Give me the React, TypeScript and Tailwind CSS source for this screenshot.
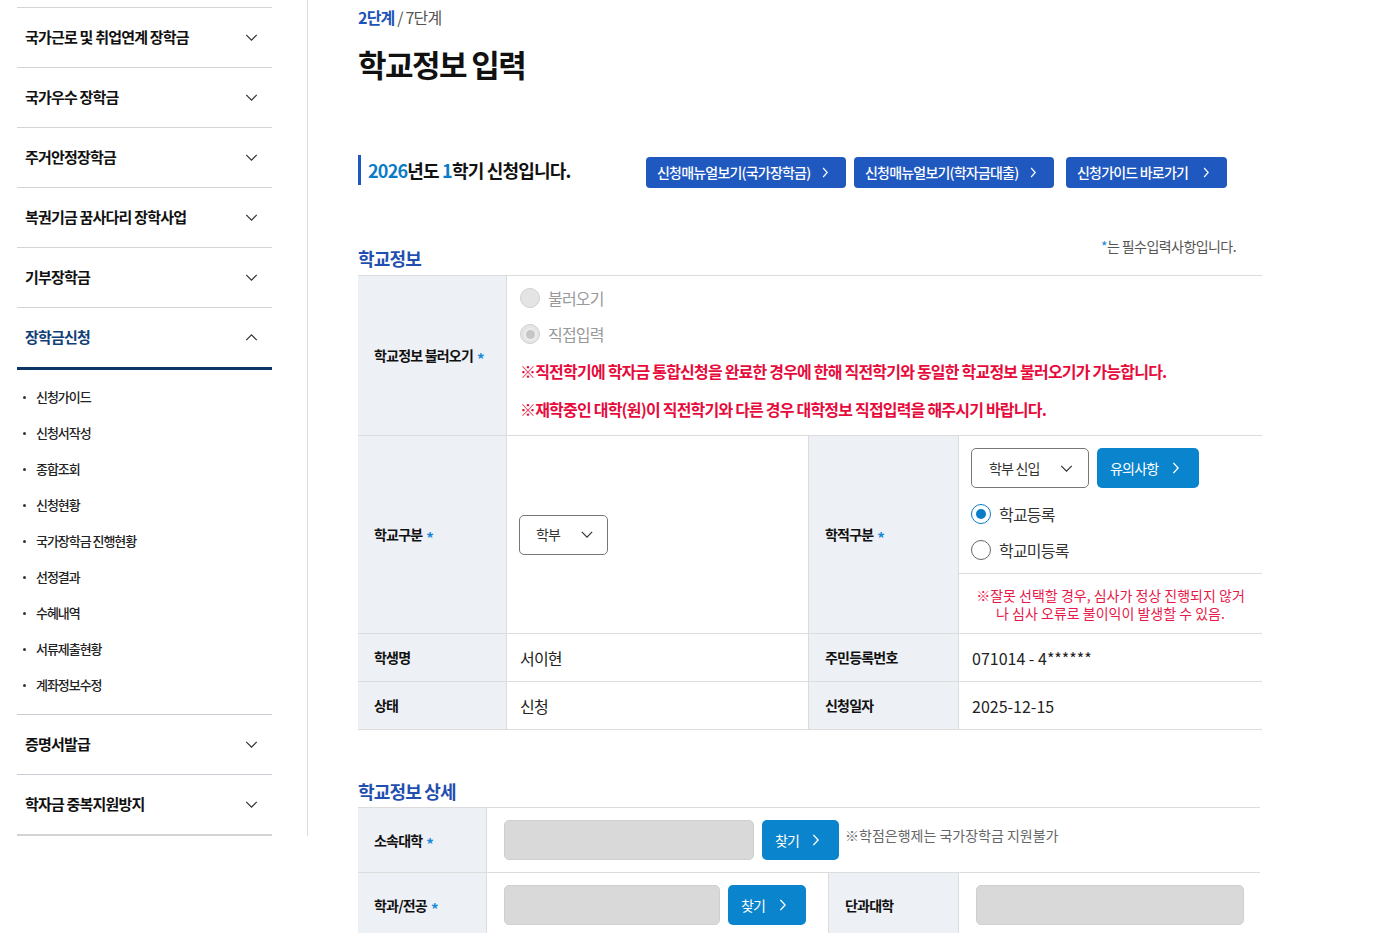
import React from 'react';

const menus = ['국가근로 및 취업연계 장학금', '국가우수 장학금', '주거안정장학금', '복권기금 꿈사다리 장학사업', '기부장학금'];
const subs = ['신청가이드', '신청서작성', '종합조회', '신청현황', '국가장학금 진행현황', '선정결과', '수혜내역', '서류제출현황', '계좌정보수정'];

function ChevronDown({ className = '' }: { className?: string }) {
  return (
    <svg viewBox="0 0 14 8" className={className} fill="none" stroke="currentColor" strokeWidth="1.4">
      <polyline points="1,1 7,7 13,1" />
    </svg>
  );
}

function ChevronUp({ className = '' }: { className?: string }) {
  return (
    <svg viewBox="0 0 14 8" className={className} fill="none" stroke="currentColor" strokeWidth="1.4">
      <polyline points="1,7 7,1 13,7" />
    </svg>
  );
}

function ChevronRight({ className = '' }: { className?: string }) {
  return (
    <svg viewBox="0 0 8 14" className={className} fill="none" stroke="currentColor" strokeWidth="1.6">
      <polyline points="1.5,1 7,7 1.5,13" />
    </svg>
  );
}

function Req() {
  return <span className="ml-[4px] inline-block translate-y-[3px] text-[15px] leading-none text-[#1a8ad8]">*</span>;
}

function Radio({ label, checked = false, disabled = false }: { label: string; checked?: boolean; disabled?: boolean }) {
  let circle;
  if (disabled) {
    circle = (
      <span className="flex h-[20px] w-[20px] items-center justify-center rounded-full border border-[#d0d0d0] bg-[#e4e4e4]">
        {checked && <span className="h-[9px] w-[9px] rounded-full bg-[#c6c6c6] ring-2 ring-[#ececec]" />}
      </span>
    );
  } else if (checked) {
    circle = (
      <span className="flex h-[20px] w-[20px] items-center justify-center rounded-full border-[1.5px] border-[#0a7dc9] bg-white">
        <span className="h-[10px] w-[10px] rounded-full bg-[#0a7dc9]" />
      </span>
    );
  } else {
    circle = <span className="h-[20px] w-[20px] rounded-full border border-[#666] bg-white" />;
  }
  return (
    <div className="flex h-[36px] items-center gap-[8px]">
      {circle}
      <span className={`text-[16px] ${disabled ? 'text-[#999]' : 'text-[#333]'}`}>{label}</span>
    </div>
  );
}

function BlueButton({ label, w }: { label: string; w: string }) {
  return (
    <button className={`flex h-[40px] ${w} items-center justify-between rounded-[5px] bg-[#0a84cc] pl-[13px] pr-[20px] text-[14px] text-white`}>
      <span>{label}</span>
      <ChevronRight className="h-[12px] w-[7px]" />
    </button>
  );
}

function Label({ children, w = 'w-[149px]' }: { children: React.ReactNode; w?: string }) {
  return (
    <div className={`flex ${w} shrink-0 items-center border-r border-[#dcdcdc] bg-[#edf0f5] pl-[16px] text-[14px] font-bold text-[#111]`}>
      {children}
    </div>
  );
}

export default function App() {
  return (
    <div className="flex min-h-screen bg-white font-['Noto_Sans_CJK_KR','Noto_Sans',sans-serif] tracking-[-0.05em] text-[#111]">
      {/* 사이드 메뉴 */}
      <aside className="w-[308px] shrink-0 self-start border-r border-[#dcdcdc] pl-[17px] pr-[35px] pt-[7px]">
        {menus.map((m) => (
          <div key={m} className="flex h-[60px] items-center justify-between border-t border-[#d4d4d4] pl-[8px] pr-[14px]">
            <span className="text-[15px] font-bold">{m}</span>
            <ChevronDown className="h-[7px] w-[13px] text-[#333]" />
          </div>
        ))}
        <div className="flex h-[63px] items-center justify-between border-t border-b-[3px] border-t-[#d4d4d4] border-b-[#0c3465] pl-[8px] pr-[14px]">
          <span className="text-[15px] font-bold text-[#123f78]">장학금신청</span>
          <ChevronUp className="h-[7px] w-[13px] text-[#333]" />
        </div>
        <ul className="pb-[11px] pt-[9px]">
          {subs.map((s) => (
            <li key={s} className="flex h-[36px] items-center gap-[10px] pl-[6px]">
              <span className="h-[3px] w-[3px] rounded-full bg-[#333]" />
              <span className="text-[13px] font-medium tracking-[-0.08em] text-[#222]">{s}</span>
            </li>
          ))}
        </ul>
        {['증명서발급', '학자금 중복지원방지'].map((m) => (
          <div key={m} className="flex h-[60px] items-center justify-between border-t border-[#c9ccd2] pl-[8px] pr-[14px]">
            <span className="text-[15px] font-bold">{m}</span>
            <ChevronDown className="h-[7px] w-[13px] text-[#333]" />
          </div>
        ))}
        <div className="h-[2px] bg-[#d4d4d4]" />
      </aside>

      {/* 본문 */}
      <main className="w-[954px] pl-[50px]">
        <p className="pt-[7px] text-[16px] leading-[20px]">
          <span className="font-bold text-[#1c54b8]">2단계</span>
          <span className="text-[#555]"> / 7단계</span>
        </p>
        <h1 className="mt-[17px] text-[31px] font-bold leading-[40px] tracking-[-0.05em] text-[#111]">학교정보 입력</h1>

        <div className="mt-[69px] flex h-[34px] items-center">
          <div className="flex w-[288px] items-center">
            <span className="h-[30px] w-[3px] bg-[#1f57c3]" />
            <span className="pl-[7px] text-[18px] font-bold">
              <span className="text-[#0a7cc7]">2026</span>년도 <span className="text-[#0a7cc7]">1</span>학기 신청입니다.
            </span>
          </div>
          <div className="flex items-center pt-[5px]">
            <button className="flex h-[31px] w-[200px] items-center justify-between rounded-[4px] bg-[#1f58bf] pl-[11px] pr-[18px] text-[14px] font-medium text-white">
              <span>신청매뉴얼보기(국가장학금)</span>
              <ChevronRight className="h-[11px] w-[6px]" />
            </button>
            <button className="ml-[8px] flex h-[31px] w-[200px] items-center justify-between rounded-[4px] bg-[#1f58bf] pl-[11px] pr-[18px] text-[14px] font-medium text-white">
              <span>신청매뉴얼보기(학자금대출)</span>
              <ChevronRight className="h-[11px] w-[6px]" />
            </button>
            <button className="ml-[12px] flex h-[31px] w-[161px] items-center justify-between rounded-[4px] bg-[#1f58bf] pl-[11px] pr-[18px] text-[14px] font-medium text-white">
              <span>신청가이드 바로가기</span>
              <ChevronRight className="h-[11px] w-[6px]" />
            </button>
          </div>
        </div>

        <div className="mt-[50px] flex justify-between pr-[26px]">
          <h2 className="pt-[9px] text-[18px] font-bold leading-[24px] text-[#1f4fb0]">학교정보</h2>
          <p className="text-[14px] leading-[18px] tracking-[-0.04em] text-[#555]">
            <span className="text-[#1a8ad8]">*</span>는 필수입력사항입니다.
          </p>
        </div>

        {/* 학교정보 테이블 */}
        <div className="mt-[5px] w-[904px] border-t border-[#dcdcdc]">
          <div className="flex h-[160px] border-b border-[#dcdcdc]">
            <Label>
              학교정보 불러오기<Req />
            </Label>
            <div className="flex-1 pl-[13px] pt-[4px]">
              <Radio label="불러오기" disabled />
              <Radio label="직접입력" disabled checked />
              <p className="flex h-[38px] items-center text-[16px] font-bold tracking-[-0.05em] text-[#e60b3c]">
                ※직전학기에 학자금 통합신청을 완료한 경우에 한해 직전학기와 동일한 학교정보 불러오기가 가능합니다.
              </p>
              <p className="flex h-[38px] items-center text-[16px] font-bold tracking-[-0.05em] text-[#e60b3c]">
                ※재학중인 대학(원)이 직전학기와 다른 경우 대학정보 직접입력을 해주시기 바랍니다.
              </p>
            </div>
          </div>

          <div className="flex h-[198px] border-b border-[#dcdcdc]">
            <Label>
              학교구분<Req />
            </Label>
            <div className="flex w-[302px] items-center border-r border-[#dcdcdc] pl-[12px]">
              <div className="flex h-[40px] w-[89px] items-center justify-between rounded-[5px] border border-[#777] pl-[16px] pr-[14px] text-[14px] text-[#333]">
                <span>학부</span>
                <ChevronDown className="h-[7px] w-[12px] text-[#333]" />
              </div>
            </div>
            <Label w="w-[150px]">
              학적구분<Req />
            </Label>
            <div className="flex flex-1 flex-col">
              <div className="border-b border-[#dcdcdc] pb-[5px] pl-[12px] pt-[12px]">
                <div className="flex gap-[8px]">
                  <div className="flex h-[40px] w-[118px] items-center justify-between rounded-[5px] border border-[#777] pl-[17px] pr-[15px] text-[14px] text-[#333]">
                    <span>학부 신입</span>
                    <ChevronDown className="h-[7px] w-[13px] text-[#333]" />
                  </div>
                  <button className="flex h-[40px] w-[102px] items-center justify-between rounded-[5px] bg-[#0a84cc] pl-[13px] pr-[20px] text-[14px] text-white">
                    <span>유의사항</span>
                    <ChevronRight className="h-[12px] w-[7px]" />
                  </button>
                </div>
                <div className="mt-[8px]">
                  <Radio label="학교등록" checked />
                  <Radio label="학교미등록" />
                </div>
              </div>
              <div className="flex flex-1 items-center justify-center text-center text-[14px] leading-[18px] tracking-normal text-[#e6194b]">
                <p>
                  ※잘못 선택할 경우, 심사가 정상 진행되지 않거
                  <br />나 심사 오류로 불이익이 발생할 수 있음.
                </p>
              </div>
            </div>
          </div>

          <div className="flex h-[48px] border-b border-[#dcdcdc]">
            <Label>학생명</Label>
            <div className="flex w-[302px] items-center border-r border-[#dcdcdc] pl-[13px] text-[16px] text-[#222]">서이현</div>
            <Label w="w-[150px]">주민등록번호</Label>
            <div className="flex flex-1 items-center pl-[13px] text-[16px] tracking-normal text-[#222]">071014 - 4******</div>
          </div>
          <div className="flex h-[48px] border-b border-[#dcdcdc]">
            <Label>상태</Label>
            <div className="flex w-[302px] items-center border-r border-[#dcdcdc] pl-[13px] text-[16px] text-[#222]">신청</div>
            <Label w="w-[150px]">신청일자</Label>
            <div className="flex flex-1 items-center pl-[13px] text-[16px] tracking-normal text-[#222]">2025-12-15</div>
          </div>
        </div>

        <h2 className="mt-[49px] text-[18px] font-bold leading-[24px] text-[#1f4fb0]">학교정보 상세</h2>

        {/* 학교정보 상세 테이블 */}
        <div className="mt-[4px] w-[902px] border-t border-[#dcdcdc]">
          <div className="flex h-[65px] border-b border-[#dcdcdc]">
            <Label w="w-[129px]">
              소속대학<Req />
            </Label>
            <div className="flex flex-1 items-start pl-[17px] pt-[12px]">
              <div className="h-[40px] w-[250px] rounded-[5px] border border-[#cfcfcf] bg-[#d9d9d9]" />
              <div className="ml-[8px]">
                <BlueButton label="찾기" w="w-[77px]" />
              </div>
              <p className="ml-[6px] mt-[6px] text-[14px] leading-[18px] tracking-normal text-[#666]">※학점은행제는 국가장학금 지원불가</p>
            </div>
          </div>
          <div className="flex h-[65px]">
            <Label w="w-[129px]">
              학과/전공<Req />
            </Label>
            <div className="flex w-[342px] items-start border-r border-[#dcdcdc] pl-[17px] pt-[12px]">
              <div className="h-[40px] w-[216px] rounded-[5px] border border-[#cfcfcf] bg-[#d9d9d9]" />
              <div className="ml-[8px]">
                <BlueButton label="찾기" w="w-[78px]" />
              </div>
            </div>
            <Label w="w-[130px]">단과대학</Label>
            <div className="flex flex-1 items-start pl-[17px] pt-[12px]">
              <div className="h-[40px] w-[268px] rounded-[5px] border border-[#cfcfcf] bg-[#d9d9d9]" />
            </div>
          </div>
        </div>
      </main>
    </div>
  );
}
